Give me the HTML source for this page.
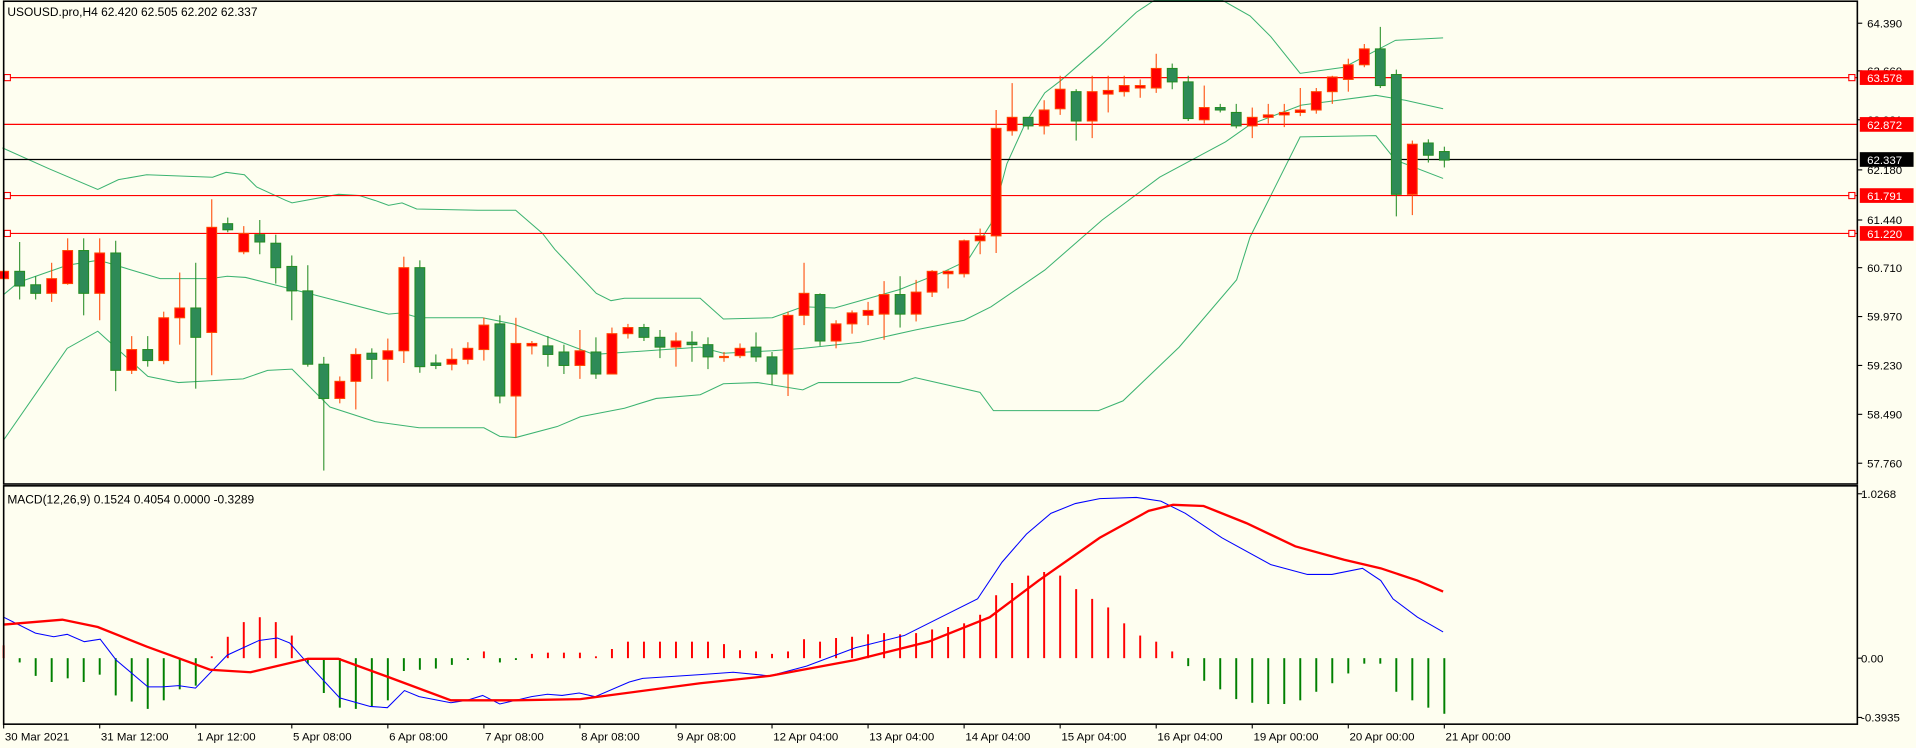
<!DOCTYPE html>
<html><head><meta charset="utf-8"><style>
html,body{margin:0;padding:0;background:#fefef0;}
svg{display:block}
text{font-family:"Liberation Sans",sans-serif;}
</style></head><body>
<svg id="s" width="1916" height="748" viewBox="0 0 1568 612" preserveAspectRatio="none" xmlns="http://www.w3.org/2000/svg">
<rect x="0" y="0" width="1568" height="612" fill="#fefef0"/>
<g id="bands" fill="none" stroke="#3cb371" stroke-width="0.85"></g>
<g id="hl"></g>
<g id="cand"></g>
<g id="macd"></g>
<g id="frame" fill="none" stroke="#000" stroke-width="1.3">
<rect x="3" y="1" width="1517" height="395"/>
<rect x="3" y="397.5" width="1517" height="195"/>
</g>
<g id="axis" font-size="9.4" fill="#000"></g>
<text x="6" y="13" font-size="9.8" fill="#000">USOUSD.pro,H4  62.420 62.505 62.202 62.337</text>
<text x="6" y="412" font-size="9.8" fill="#000">MACD(12,26,9) 0.1524 0.4054 0.0000 -0.3289</text>
</svg>
<script>
var NS="http://www.w3.org/2000/svg";
function el(p,t,a){var e=document.createElementNS(NS,t);for(var k in a)e.setAttribute(k,a[k]);p.appendChild(e);return e;}
var $=function(i){return document.getElementById(i)};
function X(i){return 3+13.1*i;}
// bands
var up=[[2,121],[40,138],[80,155],[97,147],[120,143],[174,145],[185,141],[200,143],[210,153],[234,164],[239,166],[277,159],[294,160],[307,164],[318,168],[329,166],[341,171],[391,172],[422,172],[444,191],[454,204],[488,240],[500,246],[511,244],[573,244],[592,261],[632,260],[657,251],[683,252],[736,237],[773,222],[792,213],[811,183],[824,134],[839,101],[855,76],[868,66],[900,38],[930,10],[945,0],[1000,0],[1023,13],[1040,30],[1064,60],[1100,55],[1142,33],[1181,31]];
var mid=[[3,241],[15,231],[55,217],[80,213],[88,215],[131,228],[172,228],[186,226],[201,227],[256,241],[318,257],[329,256],[343,260],[395,260],[420,265],[486,290],[573,284],[592,289],[632,287],[657,285],[704,280],[749,270],[789,262],[811,251],[855,221],[902,180],[949,145],[1003,116],[1023,102],[1065,86],[1126,78],[1150,82],[1181,89]];
var lo=[[3,360],[55,285],[80,271],[121,308],[146,313],[199,310],[219,303],[239,302],[270,333],[307,345],[343,350],[396,350],[409,357],[422,358],[456,349],[475,341],[511,334],[537,326],[573,323],[592,314],[620,313],[657,319],[670,313],[736,313],[749,309],[802,321],[813,336],[899,336],[919,328],[965,284],[1012,229],[1023,194],[1040,160],[1064,112],[1126,111],[1142,131],[1181,146]];
[up,mid,lo].forEach(function(p){el($("bands"),"polyline",{points:p.map(function(q){return q.join(",")}).join(" ")});});
// horizontal lines
var hls=[[63.5,"#ff0000","63.578",1],[101.8,"#ff0000","62.872",0],[160,"#ff0000","61.791",1],[191,"#ff0000","61.220",1]];
hls.forEach(function(h){el($("hl"),"line",{x1:3,x2:1520,y1:h[0],y2:h[0],stroke:h[1],"stroke-width":1});
 if(h[3]){el($("hl"),"rect",{x:3.5,y:h[0]-2.5,width:5,height:5,fill:"#fff",stroke:"#ff0000","stroke-width":0.9});
 el($("hl"),"rect",{x:1513,y:h[0]-2.5,width:5,height:5,fill:"#fff",stroke:"#ff0000","stroke-width":0.9});}});
el($("hl"),"line",{x1:3,x2:1520,y1:130.5,y2:130.5,stroke:"#000","stroke-width":1});
// candles
var C=[[222,228,215,262,'r'],[222,234,198,245,'g'],[233,240,226,245,'g'],[228,240,215,247,'r'],[205,232,195,233,'r'],[205,240,195,258,'g'],[207,240,195,262,'r'],[207,303,197,320,'g'],[286,303,275,306,'r'],[286,295,275,300,'g'],[260,295,255,298,'r'],[252,260,223,282,'r'],[252,276,215,318,'g'],[186,272,163,307,'r'],[183,188,178,190,'g'],[191,206,185,208,'r'],[192,198,180,208,'g'],[199,219,192,232,'g'],[218,238,209,262,'g'],[238,298,217,300,'g'],[298,326,292,385,'g'],[312,326,308,330,'r'],[290,312,285,335,'r'],[289,294,285,310,'g'],[287,294,277,312,'r'],[219,287,210,297,'r'],[219,300,213,305,'g'],[297,299,290,302,'g'],[294,298,285,303,'r'],[285,294,280,298,'r'],[266,286,260,295,'r'],[265,324,258,330,'g'],[281,324,260,358,'r'],[281,283,279,290,'r'],[283,290,275,300,'g'],[288,299,282,306,'g'],[287,299,270,310,'r'],[288,306,276,310,'g'],[273,306,268,306,'r'],[268,273,265,277,'r'],[268,276,265,279,'g'],[276,284,270,293,'g'],[279,284,272,300,'r'],[280,282,271,296,'g'],[282,292,276,302,'g'],[292,292,288,296,'r'],[285,291,281,293,'r'],[284,292,272,296,'g'],[292,306,288,315,'g'],[258,306,255,324,'r'],[240,258,215,266,'r'],[241,279,240,283,'g'],[265,279,262,285,'r'],[256,265,254,273,'r'],[254,258,247,266,'r'],[241,257,230,278,'r'],[241,257,226,268,'g'],[239,257,229,263,'r'],[222,239,221,243,'r'],[222,224,221,236,'r'],[197,224,196,227,'r'],[193,197,187,208,'r'],[105,193,90,207,'r'],[96,107,68,111,'r'],[96,103,96,106,'g'],[90,103,82,110,'r'],[73,89,62,94,'r'],[75,99,73,115,'g'],[75,99,62,113,'r'],[74,77,62,92,'r'],[70,75,62,79,'r'],[70,72,65,80,'r'],[56,72,44,76,'r'],[56,67,52,73,'g'],[67,97,62,99,'g'],[88,98,70,101,'r'],[88,90,85,92,'g'],[92,103,85,105,'g'],[96,103,88,113,'r'],[94,96,85,101,'r'],[92,94,85,104,'r'],[90,92,72,95,'r'],[75,90,72,93,'r'],[63,75,62,85,'r'],[53,65,48,75,'r'],[40,53,36,55,'r'],[40,70,22,72,'g'],[61,159,57,177,'g'],[118,159,115,176,'r'],[117,127,114,133,'g'],[124,131,120,137,'g']];
C.forEach(function(c,i){var x=X(i);var red=c[4]=='r';var wc=red?"#ff4500":"#228b22";var fc=red?"#ff0000":"#2e8b57";
 el($("cand"),"line",{x1:x,x2:x,y1:c[2],y2:c[3],stroke:wc,"stroke-width":0.85});
 var t=Math.min(c[0],c[1]),b=Math.max(c[0],c[1]);
 if(b-t<1.2){el($("cand"),"rect",{x:x-4,y:t-0.8,width:8,height:1.8,fill:wc});}
 else el($("cand"),"rect",{x:x-4,y:t,width:8,height:b-t,fill:fc,stroke:wc,"stroke-width":0.85});});
// histogram
var H=[528,542,553,558,555,558,552,569,574,580,573,564,561,537,521,509,505,509,520,543,567,579,580,578,573,549,548,547,544,540,533,542,539,535,534,534,534,537,531,525,525,525,525,525,525,527,532,533,535,533,523,525,522,521,519,518,519,518,515,513,510,503,487,477,471,468,471,482,490,497,510,520,525,533,545,557,564,572,575,576,576,573,566,559,551,543,543,566,573,579,584];
H.forEach(function(v,i){var x=X(i);var c=v<538.5?"#ff0000":"#008000";el($("macd"),"line",{x1:x,x2:x,y1:538.5,y2:(Math.abs(v-538.5)<1?(v<538.5?537:540):v),stroke:c,"stroke-width":1.6});});
var sig=[[3,511],[51,507],[80,513],[120,529],[172,548],[205,550],[252,539],[277,539],[318,554],[369,573],[420,573],[475,572],[573,559],[630,553],[700,540],[760,525],[810,505],[850,475],[900,440],[940,418],[960,413],[985,414],[1020,428],[1060,447],[1100,458],[1130,465],[1160,475],[1181,484]];
var bl=[[3,505],[29,518],[44,521],[55,519],[69,525],[82,523],[95,540],[121,562],[133,562],[146,561],[160,563],[186,536],[212,524],[227,522],[237,526],[252,543],[278,571],[303,578],[317,579],[331,565],[343,570],[369,575],[382,573],[395,569],[409,576],[435,570],[448,568],[460,569],[474,567],[487,570],[515,558],[526,555],[573,552],[600,550],[630,553],[660,545],[700,530],[740,520],[770,505],[800,490],[820,460],[840,437],[860,420],[880,412],[900,408],[930,407],[950,410],[970,420],[1000,440],[1040,462],[1070,470],[1090,470],[1115,465],[1130,475],[1140,490],[1160,505],[1181,517]];
el($("macd"),"polyline",{points:bl.map(function(q){return q.join(",")}).join(" "),fill:"none",stroke:"#0000ff","stroke-width":0.85});
el($("macd"),"polyline",{points:sig.map(function(q){return q.join(",")}).join(" "),fill:"none",stroke:"#ff0000","stroke-width":1.9});
// axis
var A=$("axis");
[["64.390",19],["63.660",58],["62.921",98],["62.180",139],["61.440",180],["60.710",219],["59.970",259],["59.230",299],["58.490",339],["57.760",379]].forEach(function(p){
 el(A,"line",{x1:1520,x2:1524,y1:p[1],y2:p[1],stroke:"#000","stroke-width":0.9});
 var t=el(A,"text",{x:1528,y:p[1]+3.4});t.textContent=p[0];});
[["63.578",63.5,"#ff0000"],["62.872",101.8,"#ff0000"],["62.337",130.5,"#000"],["61.791",160,"#ff0000"],["61.220",191,"#ff0000"]].forEach(function(p){
 el(A,"rect",{x:1522,y:p[1]-6,width:44,height:12,fill:p[2]});
 var t=el(A,"text",{x:1528,y:p[1]+3.6,fill:"#fff"});t.textContent=p[0];});
[["1.0268",404],["0.00",538.5],["-0.3935",587]].forEach(function(p){
 el(A,"line",{x1:1520,x2:1524,y1:p[1],y2:p[1],stroke:"#000","stroke-width":0.9});
 var t=el(A,"text",{x:1523,y:p[1]+3.4});t.textContent=p[0];});
["30 Mar 2021","31 Mar 12:00","1 Apr 12:00","5 Apr 08:00","6 Apr 08:00","7 Apr 08:00","8 Apr 08:00","9 Apr 08:00","12 Apr 04:00","13 Apr 04:00","14 Apr 04:00","15 Apr 04:00","16 Apr 04:00","19 Apr 00:00","20 Apr 00:00","21 Apr 00:00"].forEach(function(s,i){
 var x=X(i*6);el(A,"line",{x1:x,x2:x,y1:592,y2:596,stroke:"#000","stroke-width":0.9});
 var t=el(A,"text",{x:x+1,y:606});t.textContent=s;});
</script>
</body></html>
